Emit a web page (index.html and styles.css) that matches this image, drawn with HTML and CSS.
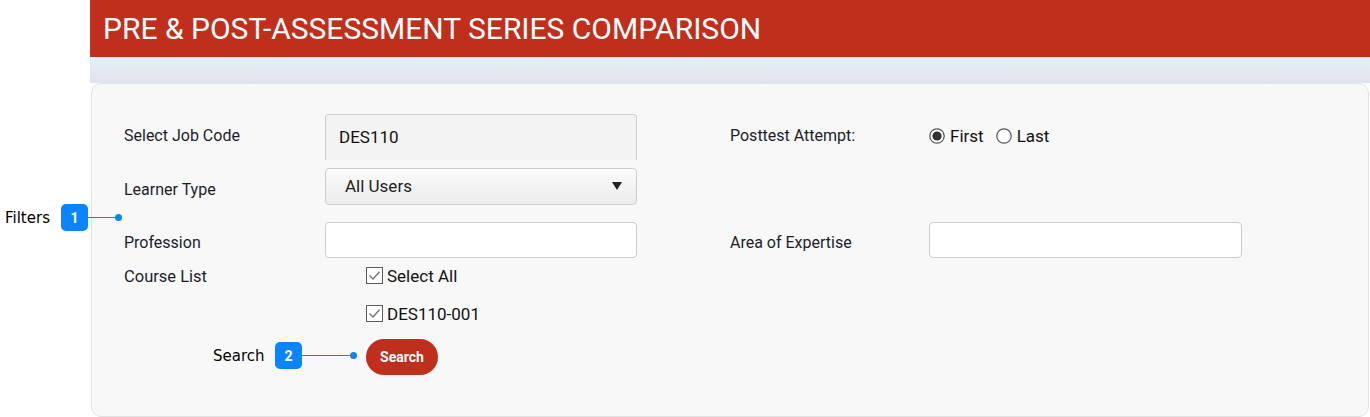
FILE: index.html
```html
<!DOCTYPE html>
<html>
<head>
<meta charset="utf-8">
<link rel="stylesheet" href="styles.css">
</head>
<body>
<div class="app">
  <header class="hdr">PRE &amp; POST-ASSESSMENT SERIES COMPARISON</header>
  <div class="band"></div>
  <section class="card">
    <div class="row r1">
      <div class="lbl">Select Job Code</div>
      <div class="ro-input">DES110</div>
      <div class="spacer"></div>
      <div class="lbl rl">Posttest Attempt:</div>
      <div class="radios">
        <span class="radio">
          <svg width="16" height="16" viewBox="0 0 16 16"><circle cx="8" cy="8" r="7.2" fill="#fff" stroke="#555" stroke-width="1.2"/><circle cx="8" cy="8" r="4.6" fill="#333"/></svg>
          First
        </span>
        <span class="radio">
          <svg width="16" height="16" viewBox="0 0 16 16"><circle cx="8" cy="8" r="7.2" fill="#fff" stroke="#555" stroke-width="1.2"/></svg>
          Last
        </span>
      </div>
    </div>
    <div class="row r2">
      <div class="lbl">Learner Type</div>
      <div class="select">All Users<span class="caret"></span></div>
    </div>
    <div class="row r3">
      <div class="lbl">Profession</div>
      <div class="input"></div>
      <div class="spacer"></div>
      <div class="lbl rl">Area of Expertise</div>
      <div class="input"></div>
    </div>
    <div class="row r4">
      <div class="lbl big">Course List</div>
      <div class="checks">
        <div class="chk">
          <svg width="17" height="17" viewBox="0 0 17 17"><rect x="0.5" y="0.5" width="16" height="16" fill="#fff" stroke="#5c5c5c"/><path d="M3.5 8.6 L7 12 L13.5 4.8" fill="none" stroke="#777" stroke-width="1.4"/></svg>
          Select All
        </div>
        <div class="chk">
          <svg width="17" height="17" viewBox="0 0 17 17"><rect x="0.5" y="0.5" width="16" height="16" fill="#fff" stroke="#5c5c5c"/><path d="M3.5 8.6 L7 12 L13.5 4.8" fill="none" stroke="#777" stroke-width="1.4"/></svg>
          DES110-001
        </div>
      </div>
    </div>
    <div class="row r5">
      <button class="btn">Search</button>
    </div>
  </section>
</div>

<div class="callout c1">
  <span class="ctext">Filters</span>
  <span class="badge">1</span>
  <span class="line"></span>
  <span class="dot"></span>
</div>
<div class="callout c2">
  <span class="ctext">Search</span>
  <span class="badge">2</span>
  <span class="line"></span>
  <span class="dot"></span>
</div>
</body>
</html>
```

FILE: styles.css
```css
html, body {
  margin: 0;
  padding: 0;
  background: #fff;
}
body {
  font-family: Roboto, "Liberation Sans", sans-serif;
  width: 1370px;
  height: 417px;
  overflow: hidden;
  position: relative;
}
.app {
  margin-left: 90px;
  display: flex;
  flex-direction: column;
}
.hdr {
  height: 57px;
  background: #bf2f1c;
  color: #fff;
  font-size: 30px;
  line-height: 58px;
  padding-left: 13px;
}
.band {
  height: 26px;
  background: linear-gradient(#e8eef8, #dfe3ec);
}
.card {
  margin: 0 1px 0 1px;
  height: 334px;
  box-sizing: border-box;
  background: #f8f8f8;
  border: 1px solid #e2e2e2;
  border-radius: 10px;
  padding: 30px 0 0 32px;
  color: #1d1d2b;
}
.row {
  display: flex;
  align-items: center;
}
.lbl {
  width: 201px;
  font-size: 16px;
  flex: none;
}
.lbl.rl {
  width: 199px;
}
.lbl.big {
  font-size: 16.5px;
  align-self: flex-start;
}
.spacer {
  width: 93px;
  flex: none;
}
.r1 { height: 46px; }
.r1 .lbl { padding-bottom: 4px; }
.ro-input {
  width: 312px;
  height: 46px;
  box-sizing: border-box;
  border: 1px solid #cfcfcf;
  border-bottom: none;
  border-radius: 4px 4px 0 0;
  background: #f3f3f3;
  font-size: 17px;
  color: #111;
  padding: 12px 0 0 13px;
  flex: none;
}
.radios {
  display: flex;
  gap: 12px;
  font-size: 17px;
  color: #111;
  padding-bottom: 3px;
}
.radio {
  display: flex;
  align-items: center;
  gap: 5px;
}
.r2 { height: 37px; margin-top: 8px; }
.r2 .lbl { padding-top: 5px; }
.select {
  width: 312px;
  height: 37px;
  box-sizing: border-box;
  border: 1px solid #cccccc;
  border-radius: 4px;
  background: linear-gradient(#fbfbfb, #ececec);
  font-size: 17px;
  color: #222;
  padding: 0 0 2px 19px;
  display: flex;
  align-items: center;
  justify-content: space-between;
  flex: none;
}
.caret {
  width: 0;
  height: 0;
  border-left: 5px solid transparent;
  border-right: 5px solid transparent;
  border-top: 8px solid #222;
  margin-right: 14px;
}
.r3 { height: 36px; margin-top: 17px; }
.r3 .lbl { padding-top: 4px; }
.input {
  width: 312px;
  height: 36px;
  box-sizing: border-box;
  border: 1px solid #cccccc;
  border-radius: 4px;
  background: #fff;
  flex: none;
}
.r3 .input:last-child { width: 313px; }
.r4 {
  margin-top: 9px;
  align-items: flex-start;
}
.checks {
  margin-left: 41px;
  display: flex;
  flex-direction: column;
  gap: 21px;
  font-size: 17px;
  color: #111;
}
.chk {
  display: flex;
  align-items: center;
  gap: 4px;
  height: 17px;
}
.r5 {
  margin-top: 17px;
  padding-left: 242px;
}
.btn {
  width: 72px;
  height: 36px;
  border: none;
  border-radius: 18px;
  background: #bf2f1c;
  color: #fff;
  font-family: Roboto, "Liberation Sans", sans-serif;
  font-weight: 700;
  font-size: 14px;
  padding: 0;
}

/* callouts */
.callout {
  position: absolute;
  display: flex;
  align-items: center;
}
.c1 { left: 5px; top: 204px; }
.c2 { left: 213px; top: 342px; }
.ctext {
  font-family: "DejaVu Sans", sans-serif;
  font-size: 15px;
  color: #000;
}
.c1 .ctext { width: 56px; }
.c2 .ctext { width: 62px; }
.badge {
  width: 27px;
  height: 27px;
  border-radius: 5px;
  background: #0a84ff;
  color: #fff;
  font-family: Roboto, sans-serif;
  font-weight: 700;
  font-size: 14px;
  display: flex;
  align-items: center;
  justify-content: center;
}
.line {
  height: 1px;
  background: #0a84ff;
}
.c1 .line { width: 29px; }
.c2 .line { width: 50px; }
.dot {
  width: 7px;
  height: 7px;
  border-radius: 50%;
  background: #0a84ff;
  margin-left: -2px;
}
```
